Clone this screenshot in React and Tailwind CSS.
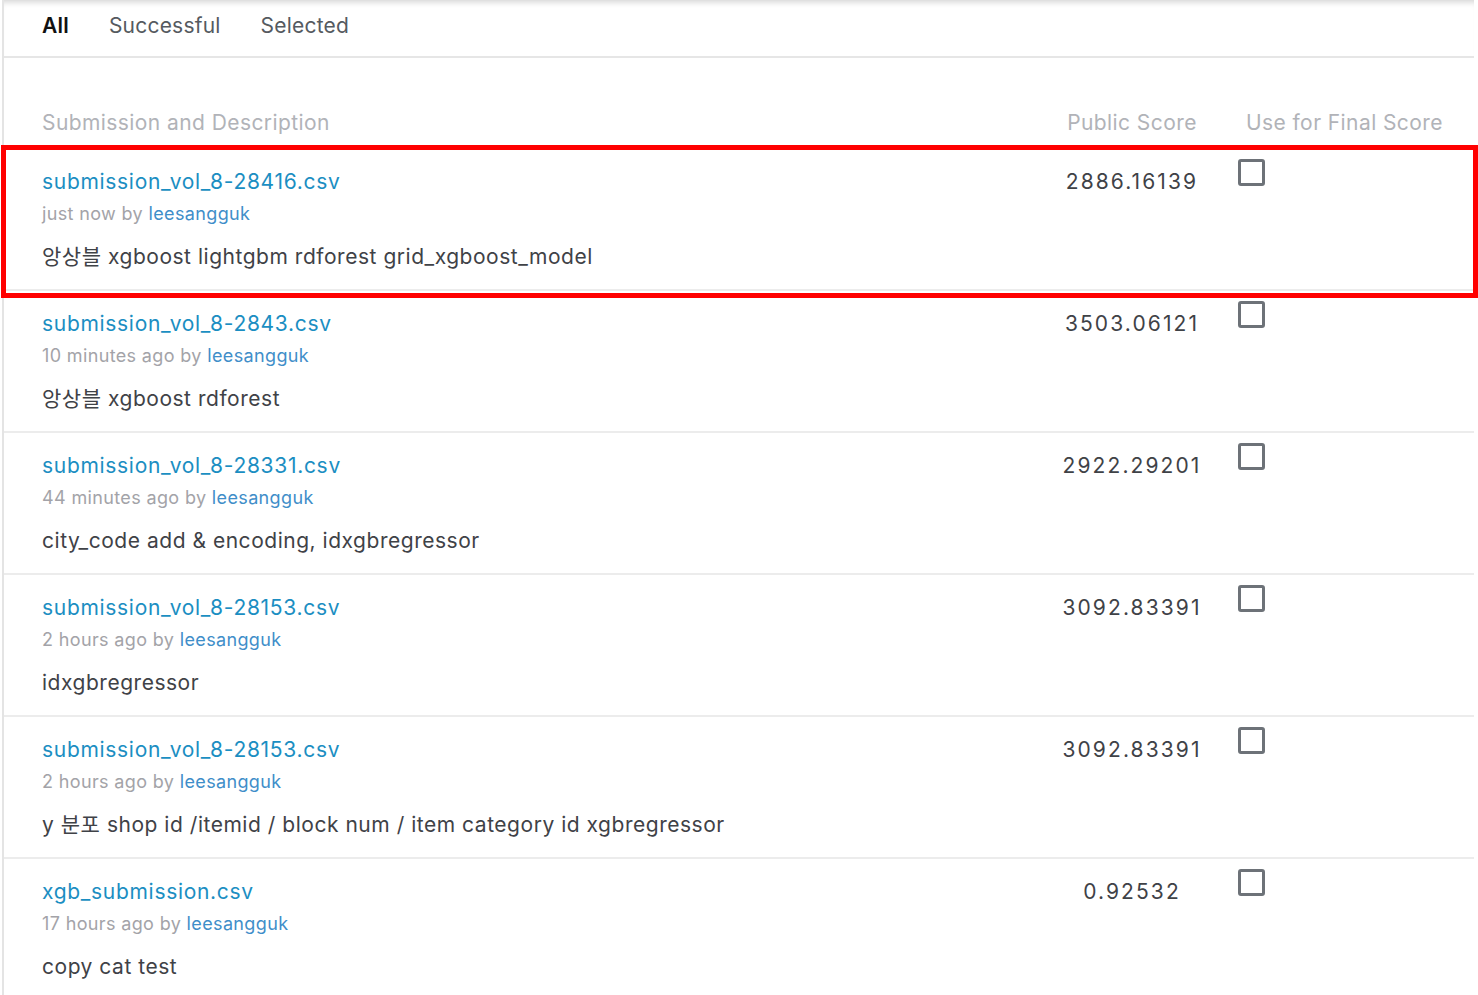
import React from "react";

const rows = [
  {
    file: "submission_vol_8-28416.csv",
    when: "just now",
    desc: "앙상블 xgboost lightgbm rdforest grid_xgboost_model",
    score: "2886.16139",
  },
  {
    file: "submission_vol_8-2843.csv",
    when: "10 minutes ago",
    desc: "앙상블 xgboost rdforest",
    score: "3503.06121",
  },
  {
    file: "submission_vol_8-28331.csv",
    when: "44 minutes ago",
    desc: "city_code add & encoding, idxgbregressor",
    score: "2922.29201",
  },
  {
    file: "submission_vol_8-28153.csv",
    when: "2 hours ago",
    desc: "idxgbregressor",
    score: "3092.83391",
  },
  {
    file: "submission_vol_8-28153.csv",
    when: "2 hours ago",
    desc: "y 분포 shop id /itemid / block num / item category id xgbregressor",
    score: "3092.83391",
  },
  {
    file: "xgb_submission.csv",
    when: "17 hours ago",
    desc: "copy cat test",
    score: "0.92532",
  },
];

const font = {
  fontFamily: '"Inter", "Noto Sans CJK KR", "Noto Sans", sans-serif',
};

const SubmissionRow = ({ row }) => (
  <div className="flex h-[142px] border-b-2 border-[#ececec] pt-[20px]">
    <div className="flex-1 pl-[38px]">
      <div className="text-[21px] leading-[26px] tracking-[0.033em] text-[#1b8ec2]">
        {row.file}
      </div>
      <div className="mt-[7px] text-[18px] leading-[24px] tracking-[0.02em] text-[#a3a3a8]">
        {row.when} by <span className="text-[#3f8ec9]">leesangguk</span>
      </div>
      <div className="mt-[17px] text-[21px] leading-[28px] tracking-[0.025em] text-[#3f4247]">
        {row.desc}
      </div>
    </div>
    <div className="w-[190px] text-center text-[21px] leading-[26px] tracking-[0.1em] text-[#3f4247]">
      {row.score}
    </div>
    <div className="w-[247px] pl-[11px]">
      <div className="mt-[-10px] h-[27px] w-[27px] rounded-[3px] border-[3px] border-[#6d7278]"></div>
    </div>
  </div>
);

const App = () => {
  return (
    <div
      className="relative h-[995px] w-[1478px] overflow-hidden bg-white"
      style={font}
    >
      <div className="ml-[2px] w-[1472px] border-l-2 border-[#e4e4e4]">
        {/* tabs */}
        <div className="flex h-[58px] items-center gap-10 border-b-2 border-[#e6e6e6] pl-[38px] pb-[4px] text-[21px] tracking-[0.01em] shadow-[inset_0_7px_6px_-5px_rgba(0,0,0,0.18)]">
          <span className="font-semibold text-[#111]">All</span>
          <span className="text-[#555a60]">Successful</span>
          <span className="text-[#555a60]">Selected</span>
        </div>

        {/* column headers */}
        <div className="flex pt-[53px] pb-[14px] text-[21px] leading-[24px] tracking-[0.02em] text-[#b1b3b8]">
          <div className="flex-1 pl-[38px]">Submission and Description</div>
          <div className="w-[190px] text-center">Public Score</div>
          <div className="w-[247px] pl-[19px]">Use for Final Score</div>
        </div>

        {rows.map((row, i) => (
          <SubmissionRow key={i} row={row} />
        ))}
      </div>

      {/* highlight annotation */}
      <div className="absolute left-[1px] top-[145px] h-[153px] w-[1477px] border-[5px] border-[#ff0000]"></div>
    </div>
  );
};

export default App;
